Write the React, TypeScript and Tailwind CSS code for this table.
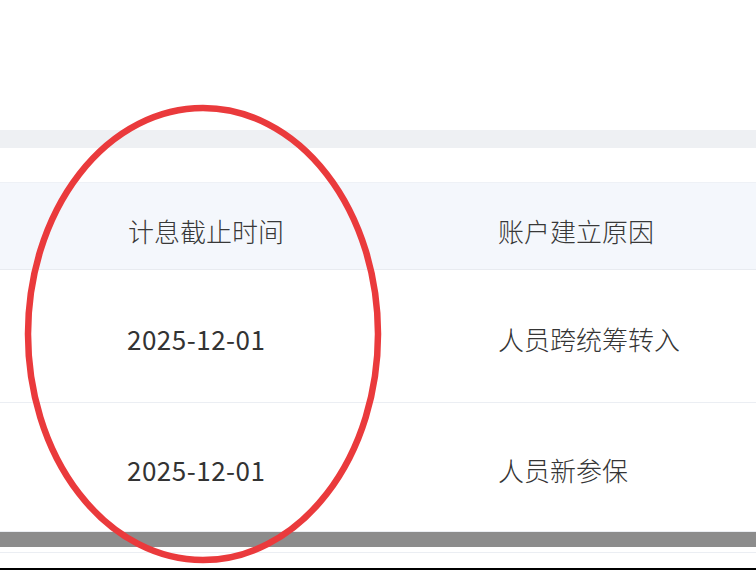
import React from 'react';

const rows = [
    { endDate: '2025-12-01', reason: '人员跨统筹转入', height: 'h-[133px]' },
    { endDate: '2025-12-01', reason: '人员新参保', height: 'h-[129px]' },
];

const font = { fontFamily: '"Noto Sans CJK SC", "Noto Sans", sans-serif' };

export default function App() {
    return (
        <main className="relative w-[756px] h-[570px] overflow-hidden bg-white text-[#303030] font-light" style={font}>

            {/* top blank area */}
            <div className="h-[130px]" />
            {/* grey divider band */}
            <div className="h-[18px] bg-[#eef0f3]" />
            <div className="h-[34px]" />

            {/* table header */}
            <div className="flex h-[88px] bg-[#f4f7fc] border-t border-[#eef1f6] border-b border-b-[#e8ebf0]">
                <div className="w-[370px] pl-[128px] pt-[8px] flex items-center text-[26px] text-[#383838]">计息截止时间</div>
                <div className="flex-1 pl-[128px] pt-[8px] flex items-center text-[26px] text-[#383838]">账户建立原因</div>
            </div>

            {/* table body */}
            {rows.map((row, i) => (
                <div key={i} className={`flex ${row.height} border-b border-[#ebeef3]`}>
                    <div className="w-[370px] pl-[127px] pt-[5px] flex items-center text-[26px] font-normal tracking-[0.5px] text-[#333333]">{row.endDate}</div>
                    <div className="flex-1 pl-[128px] pt-[5px] flex items-center text-[26px] text-[#353535]">{row.reason}</div>
                </div>
            ))}

            {/* horizontal scrollbar */}
            <div className="h-[15px] bg-[#8c8c8c]" />
            <div className="h-[5px]" />
            <div className="h-[1px] bg-[#ebeef3]" />
            <div className="h-[15px]" />
            <div className="h-[2px] bg-black" />

            {/* red annotation circle */}
            <svg className="absolute left-0 top-0 pointer-events-none" width="756" height="570" viewBox="0 0 756 570">
                <ellipse cx="203" cy="334" rx="175" ry="226" fill="none" stroke="#ea3a3c" strokeWidth="6.5" />
            </svg>
        </main>
    );
}
